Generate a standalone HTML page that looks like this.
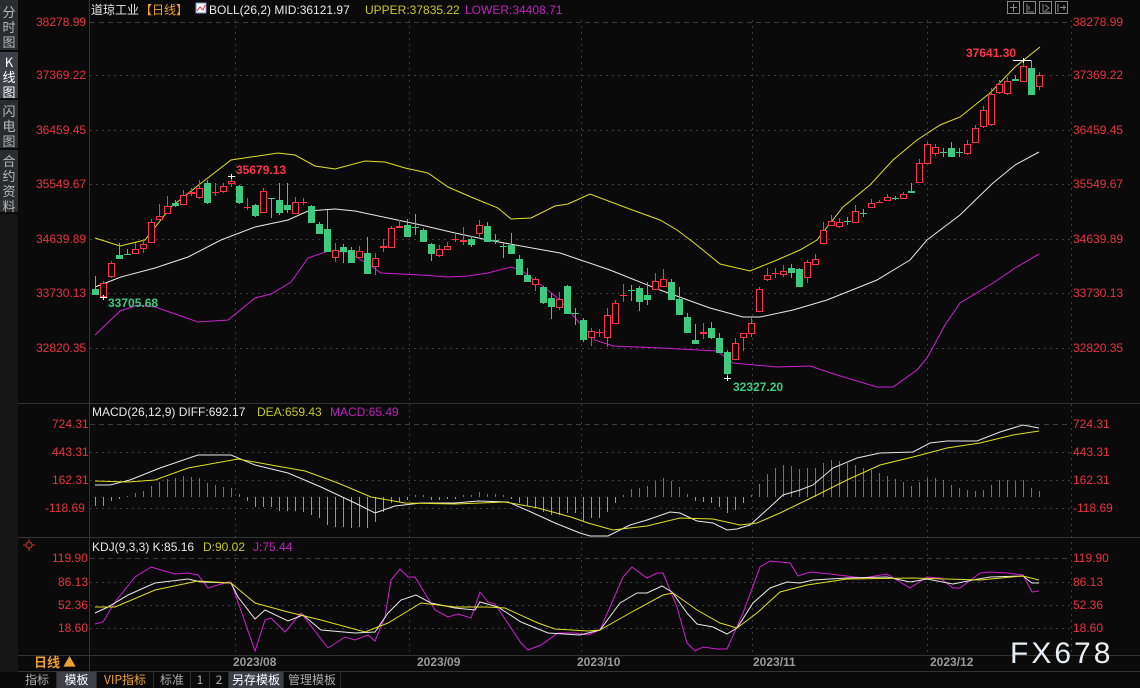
<!DOCTYPE html>
<html><head><meta charset="utf-8"><style>
html,body{margin:0;padding:0;background:#0a0a0a;}
body{width:1140px;height:688px;overflow:hidden;position:relative;font-family:"Liberation Sans","Noto Sans CJK SC",sans-serif;}
svg{position:absolute;left:0;top:0;}
.t{font-family:"Liberation Sans","Noto Sans CJK SC",sans-serif;font-size:12px;}
.side{position:absolute;left:0;width:18px;background:#2a2c30;color:#b8b8b8;font-size:13px;line-height:15px;text-align:center;font-family:"Noto Sans CJK SC",sans-serif;}
.tabs{position:absolute;left:18px;top:672px;height:16px;width:1122px;background:#0a0a0a;font-family:"Noto Sans CJK SC",sans-serif;font-size:12px;line-height:16px;color:#aaa;}
.tabs span{position:absolute;top:0;height:16px;text-align:center;border-right:1px solid #2a2a2a;}
</style></head><body>
<div class="side" style="top:0;height:50px;padding-top:4px;box-sizing:border-box;">分<br>时<br>图</div>
<div class="side" style="top:52px;height:46px;padding-top:2px;box-sizing:border-box;background:#3c3f46;color:#fff;">K<br>线<br>图</div>
<div class="side" style="top:100px;height:48px;padding-top:3px;box-sizing:border-box;">闪<br>电<br>图</div>
<div class="side" style="top:150px;height:62px;padding-top:3px;box-sizing:border-box;">合<br>约<br>资<br>料</div>
<div class="side" style="top:214px;height:458px;background:#151515;"></div>

<svg width="1140" height="688" viewBox="0 0 1140 688">
<g stroke="#333" stroke-width="1">
<line x1="89.5" y1="0" x2="89.5" y2="672"/>
<line x1="18" y1="403.5" x2="1140" y2="403.5"/>
<line x1="18" y1="537.5" x2="1140" y2="537.5"/>
<line x1="18" y1="655.5" x2="1140" y2="655.5"/>
<line x1="18" y1="671.5" x2="1140" y2="671.5"/>
</g>
<g stroke="#3a3a3a" stroke-width="1" stroke-dasharray="2,4">
<line x1="90" y1="22.5" x2="1070" y2="22.5" stroke-dasharray="5,4"/>
<line x1="90" y1="75.5" x2="1070" y2="75.5"/>
<line x1="90" y1="130.5" x2="1070" y2="130.5"/>
<line x1="90" y1="184.5" x2="1070" y2="184.5"/>
<line x1="90" y1="239.5" x2="1070" y2="239.5"/>
<line x1="90" y1="293.5" x2="1070" y2="293.5"/>
<line x1="90" y1="348.5" x2="1070" y2="348.5"/>
<line x1="90" y1="424.5" x2="1070" y2="424.5" stroke-dasharray="5,4"/>
<line x1="90" y1="452.5" x2="1070" y2="452.5"/>
<line x1="90" y1="480.5" x2="1070" y2="480.5"/>
<line x1="90" y1="508.5" x2="1070" y2="508.5"/>
<line x1="90" y1="558.5" x2="1070" y2="558.5" stroke-dasharray="5,4"/>
<line x1="90" y1="582.5" x2="1070" y2="582.5"/>
<line x1="90" y1="605.5" x2="1070" y2="605.5"/>
<line x1="90" y1="628.5" x2="1070" y2="628.5"/>
<line x1="235.5" y1="20" x2="235.5" y2="655"/>
<line x1="409.5" y1="20" x2="409.5" y2="655"/>
<line x1="581.5" y1="20" x2="581.5" y2="655"/>
<line x1="752.5" y1="20" x2="752.5" y2="655"/>
<line x1="927.5" y1="20" x2="927.5" y2="655"/>
<line x1="1071.5" y1="20" x2="1071.5" y2="655"/>
</g>

<text class="t" x="91" y="14" fill="#e8e8e8">道琼工业</text>
<text class="t" x="140" y="14" fill="#f0a030">【日线】</text>
<rect x="196" y="3" width="10" height="10" fill="#fff" stroke="#8090c0"/>
<polyline points="197,11 200,7 203,10 205,5" fill="none" stroke="#e03040" stroke-width="1"/>
<text class="t" x="209" y="14" fill="#e8e8e8">BOLL(26,2) MID:36121.97</text>
<text class="t" x="365" y="14" fill="#c8c820">UPPER:37835.22</text>
<text class="t" x="465" y="14" fill="#c020c0">LOWER:34408.71</text>
<g fill="none" stroke="#888" stroke-width="1">
<rect x="1007.5" y="1.5" width="12" height="12"/><rect x="1023.5" y="1.5" width="12" height="12"/><rect x="1039.5" y="1.5" width="12" height="12"/><rect x="1055.5" y="1.5" width="12" height="12"/>
<path d="M1013.5 4v8M1010 7.5h7M1027 4v8h7M1029 6v4M1043 4v8h7M1045 5l4 3-4 3M1058 4v8M1060 7.5h6M1064 5v5"/>
</g>

<g class="t" fill="#e8333f" font-size="12">
<text x="1073" y="26">38278.99</text><text x="1073" y="79">37369.22</text><text x="1073" y="134">36459.45</text><text x="1073" y="188">35549.67</text><text x="1073" y="243">34639.89</text><text x="1073" y="297">33730.13</text><text x="1073" y="352">32820.35</text>
<text x="36" y="26">38278.99</text><text x="36" y="79">37369.22</text><text x="36" y="134">36459.45</text><text x="36" y="188">35549.67</text><text x="36" y="243">34639.89</text><text x="36" y="297">33730.13</text><text x="36" y="352">32820.35</text>
<text x="1073" y="428">724.31</text><text x="1073" y="456">443.31</text><text x="1073" y="484">162.31</text><text x="1073" y="512">-118.69</text>
<text x="52" y="428">724.31</text><text x="52" y="456">443.31</text><text x="52" y="484">162.31</text><text x="45" y="512">-118.69</text>
<text x="1073" y="562">119.90</text><text x="1073" y="586">86.13</text><text x="1073" y="609">52.36</text><text x="1073" y="632">18.60</text>
<text x="52" y="562">119.90</text><text x="58" y="586">86.13</text><text x="58" y="609">52.36</text><text x="58" y="632">18.60</text>
</g>

<!-- Bollinger -->
<polyline fill="none" stroke="#e0e020" stroke-width="1" points="95,238 120,246 145,240 171,207 200,184 231,160 278,153 295,155 315,166 335,169 365,161 385,162 405,168 428,173 448,187 471,197 498,208 511,219 531,218 555,206 568,204 590,194 627,208 660,220 677,230 693,242 720,264 750,271 777,260 800,250 817,240 843,207 870,185 893,160 917,140 940,125 960,117 990,93 1015,67 1040,47"/>
<polyline fill="none" stroke="#e8e8e8" stroke-width="1" points="95,287 121,277 155,268 188,257 221,240 255,227 288,220 308,211 335,209 355,211 388,218 421,225 455,233 488,240 521,246 560,253 610,270 660,290 710,308 743,317 760,317 793,310 827,300 877,280 910,260 927,240 960,215 993,183 1015,165 1039,152"/>
<polyline fill="none" stroke="#d020d0" stroke-width="1" points="95,335 120,311 138,305 155,307 198,322 228,320 255,298 271,294 291,282 308,258 328,251 348,252 371,266 381,273 421,275 448,277 468,276 488,273 511,267 521,270 545,288 560,300 577,320 595,340 613,346 660,348 717,351 733,363 777,367 810,366 837,375 877,387 893,387 917,370 927,358 945,325 960,303 993,283 1015,268 1039,254"/>

<g stroke="#ff3348" fill="#0a0a0a" stroke-width="1">
<line x1="103.5" y1="281" x2="103.5" y2="297"/><rect x="100.5" y="283.5" width="6" height="13"/>
<line x1="111.5" y1="261" x2="111.5" y2="278"/><rect x="108.5" y="263.5" width="6" height="13"/>
<line x1="135.5" y1="243" x2="135.5" y2="254"/><rect x="132.5" y="249.5" width="6" height="4"/>
<line x1="143.5" y1="239" x2="143.5" y2="253"/><rect x="140.5" y="244.5" width="6" height="4"/>
<line x1="151.5" y1="219" x2="151.5" y2="243"/><rect x="148.5" y="222.5" width="6" height="20"/>
<line x1="159.5" y1="204" x2="159.5" y2="220"/><rect x="156.5" y="216.5" width="6" height="3"/>
<line x1="167.5" y1="196" x2="167.5" y2="213"/><rect x="164.5" y="206.5" width="6" height="7"/>
<line x1="183.5" y1="190" x2="183.5" y2="205"/><rect x="180.5" y="195.5" width="6" height="9"/>
<line x1="191.5" y1="188" x2="191.5" y2="196"/><rect x="188.5" y="192.5" width="6" height="1"/>
<line x1="199.5" y1="180" x2="199.5" y2="199"/><rect x="196.5" y="188.5" width="6" height="9"/>
<line x1="215.5" y1="183" x2="215.5" y2="196"/><line x1="212" y1="192.5" x2="219" y2="192.5"/>
<line x1="223.5" y1="183" x2="223.5" y2="193"/><rect x="220.5" y="186.5" width="6" height="5"/>
<line x1="231.5" y1="177" x2="231.5" y2="187"/><rect x="228.5" y="181.5" width="6" height="2"/>
<line x1="247.5" y1="198" x2="247.5" y2="210"/><line x1="244" y1="207.5" x2="251" y2="207.5"/>
<line x1="263.5" y1="188" x2="263.5" y2="213"/><rect x="260.5" y="191.5" width="6" height="21"/>
<line x1="295.5" y1="197" x2="295.5" y2="214"/><rect x="292.5" y="202.5" width="6" height="11"/>
<line x1="303.5" y1="198" x2="303.5" y2="205"/><line x1="300" y1="202.5" x2="307" y2="202.5"/>
<line x1="335.5" y1="243" x2="335.5" y2="262"/><rect x="332.5" y="250.5" width="6" height="7"/>
<line x1="359.5" y1="246" x2="359.5" y2="258"/><rect x="356.5" y="251.5" width="6" height="6"/>
<line x1="375.5" y1="253" x2="375.5" y2="275"/><rect x="372.5" y="258.5" width="6" height="8"/>
<line x1="383.5" y1="239" x2="383.5" y2="252"/><rect x="380.5" y="246.5" width="6" height="1"/>
<line x1="391.5" y1="226" x2="391.5" y2="248"/><rect x="388.5" y="228.5" width="6" height="19"/>
<line x1="399.5" y1="220" x2="399.5" y2="228"/><rect x="396.5" y="226.5" width="6" height="1"/>
<line x1="439.5" y1="245" x2="439.5" y2="257"/><rect x="436.5" y="249.5" width="6" height="6"/>
<line x1="447.5" y1="242" x2="447.5" y2="250"/><rect x="444.5" y="246.5" width="6" height="3"/>
<line x1="455.5" y1="232" x2="455.5" y2="242"/><line x1="452" y1="239.5" x2="459" y2="239.5"/>
<line x1="463.5" y1="227" x2="463.5" y2="245"/><rect x="460.5" y="240.5" width="6" height="1"/>
<line x1="479.5" y1="220" x2="479.5" y2="237"/><rect x="476.5" y="225.5" width="6" height="8"/>
<line x1="535.5" y1="277" x2="535.5" y2="291"/><rect x="532.5" y="279.5" width="6" height="5"/>
<line x1="559.5" y1="292" x2="559.5" y2="310"/><rect x="556.5" y="299.5" width="6" height="8"/>
<line x1="591.5" y1="328" x2="591.5" y2="346"/><rect x="588.5" y="331.5" width="6" height="6"/>
<line x1="599.5" y1="329" x2="599.5" y2="337"/><line x1="596" y1="332.5" x2="603" y2="332.5"/>
<line x1="607.5" y1="308" x2="607.5" y2="347"/><rect x="604.5" y="315.5" width="6" height="22"/>
<line x1="615.5" y1="300" x2="615.5" y2="324"/><rect x="612.5" y="303.5" width="6" height="20"/>
<line x1="623.5" y1="284" x2="623.5" y2="302"/><line x1="620" y1="295.5" x2="627" y2="295.5"/>
<line x1="655.5" y1="273" x2="655.5" y2="289"/><rect x="652.5" y="281.5" width="6" height="8"/>
<line x1="663.5" y1="269" x2="663.5" y2="287"/><rect x="660.5" y="279.5" width="6" height="7"/>
<line x1="703.5" y1="323" x2="703.5" y2="339"/><rect x="700.5" y="332.5" width="6" height="1"/>
<line x1="735.5" y1="338" x2="735.5" y2="360"/><rect x="732.5" y="343.5" width="6" height="16"/>
<line x1="743.5" y1="333" x2="743.5" y2="351"/><rect x="740.5" y="333.5" width="6" height="4"/>
<line x1="751.5" y1="318" x2="751.5" y2="337"/><rect x="748.5" y="323.5" width="6" height="10"/>
<line x1="759.5" y1="287" x2="759.5" y2="312"/><rect x="756.5" y="289.5" width="6" height="22"/>
<line x1="767.5" y1="268" x2="767.5" y2="281"/><rect x="764.5" y="275.5" width="6" height="4"/>
<line x1="775.5" y1="268" x2="775.5" y2="278"/><line x1="772" y1="273.5" x2="779" y2="273.5"/>
<line x1="783.5" y1="265" x2="783.5" y2="277"/><rect x="780.5" y="271.5" width="6" height="3"/>
<line x1="807.5" y1="260" x2="807.5" y2="283"/><rect x="804.5" y="262.5" width="6" height="15"/>
<line x1="815.5" y1="254" x2="815.5" y2="265"/><rect x="812.5" y="259.5" width="6" height="5"/>
<line x1="823.5" y1="222" x2="823.5" y2="244"/><rect x="820.5" y="230.5" width="6" height="13"/>
<line x1="831.5" y1="215" x2="831.5" y2="226"/><rect x="828.5" y="221.5" width="6" height="4"/>
<line x1="839.5" y1="218" x2="839.5" y2="228"/><rect x="836.5" y="222.5" width="6" height="4"/>
<line x1="855.5" y1="205" x2="855.5" y2="223"/><rect x="852.5" y="211.5" width="6" height="11"/>
<line x1="871.5" y1="199" x2="871.5" y2="208"/><rect x="868.5" y="203.5" width="6" height="4"/>
<line x1="879.5" y1="200" x2="879.5" y2="203"/><line x1="876" y1="202.5" x2="883" y2="202.5"/>
<line x1="887.5" y1="194" x2="887.5" y2="201"/><rect x="884.5" y="197.5" width="6" height="3"/>
<line x1="903.5" y1="192" x2="903.5" y2="199"/><rect x="900.5" y="194.5" width="6" height="4"/>
<line x1="919.5" y1="159" x2="919.5" y2="183"/><rect x="916.5" y="163.5" width="6" height="19"/>
<line x1="927.5" y1="142" x2="927.5" y2="164"/><rect x="924.5" y="144.5" width="6" height="19"/>
<line x1="935.5" y1="144" x2="935.5" y2="156"/><rect x="932.5" y="147.5" width="6" height="6"/>
<line x1="967.5" y1="140" x2="967.5" y2="155"/><rect x="964.5" y="144.5" width="6" height="9"/>
<line x1="975.5" y1="125" x2="975.5" y2="143"/><rect x="972.5" y="128.5" width="6" height="14"/>
<line x1="983.5" y1="106" x2="983.5" y2="128"/><rect x="980.5" y="110.5" width="6" height="16"/>
<line x1="991.5" y1="88" x2="991.5" y2="126"/><rect x="988.5" y="94.5" width="6" height="30"/>
<line x1="999.5" y1="80" x2="999.5" y2="94"/><rect x="996.5" y="84.5" width="6" height="8"/>
<line x1="1007.5" y1="77" x2="1007.5" y2="95"/><rect x="1004.5" y="81.5" width="6" height="12"/>
<line x1="1023.5" y1="62" x2="1023.5" y2="82"/><rect x="1020.5" y="66.5" width="6" height="15"/>
<line x1="1039.5" y1="72" x2="1039.5" y2="90"/><rect x="1036.5" y="75.5" width="6" height="11"/>
</g>
<g stroke="#3cc980" fill="#3cc980" stroke-width="1">
<line x1="95.5" y1="276" x2="95.5" y2="295"/><rect x="92.5" y="289.5" width="6" height="5"/>
<line x1="119.5" y1="243" x2="119.5" y2="259"/><rect x="116.5" y="255.5" width="6" height="3"/>
<line x1="127.5" y1="249" x2="127.5" y2="255"/><line x1="124" y1="254.5" x2="131" y2="254.5"/>
<line x1="175.5" y1="200" x2="175.5" y2="207"/><rect x="172.5" y="203.5" width="6" height="2"/>
<line x1="207.5" y1="180" x2="207.5" y2="204"/><rect x="204.5" y="183.5" width="6" height="19"/>
<line x1="239.5" y1="185" x2="239.5" y2="204"/><rect x="236.5" y="186.5" width="6" height="16"/>
<line x1="255.5" y1="204" x2="255.5" y2="217"/><rect x="252.5" y="205.5" width="6" height="10"/>
<line x1="271.5" y1="198" x2="271.5" y2="218"/><line x1="268" y1="198.5" x2="275" y2="198.5"/>
<line x1="279.5" y1="183" x2="279.5" y2="215"/><rect x="276.5" y="200.5" width="6" height="12"/>
<line x1="287.5" y1="183" x2="287.5" y2="213"/><rect x="284.5" y="205.5" width="6" height="4"/>
<line x1="311.5" y1="205" x2="311.5" y2="223"/><rect x="308.5" y="206.5" width="6" height="16"/>
<line x1="319.5" y1="222" x2="319.5" y2="234"/><rect x="316.5" y="224.5" width="6" height="9"/>
<line x1="327.5" y1="210" x2="327.5" y2="252"/><rect x="324.5" y="229.5" width="6" height="22"/>
<line x1="343.5" y1="244" x2="343.5" y2="263"/><rect x="340.5" y="247.5" width="6" height="4"/>
<line x1="351.5" y1="247" x2="351.5" y2="263"/><rect x="348.5" y="250.5" width="6" height="12"/>
<line x1="367.5" y1="237" x2="367.5" y2="274"/><rect x="364.5" y="253.5" width="6" height="20"/>
<line x1="407.5" y1="219" x2="407.5" y2="237"/><rect x="404.5" y="225.5" width="6" height="11"/>
<line x1="415.5" y1="214" x2="415.5" y2="235"/><line x1="412" y1="227.5" x2="419" y2="227.5"/>
<line x1="423.5" y1="228" x2="423.5" y2="242"/><rect x="420.5" y="230.5" width="6" height="11"/>
<line x1="431.5" y1="243" x2="431.5" y2="261"/><rect x="428.5" y="244.5" width="6" height="9"/>
<line x1="471.5" y1="236" x2="471.5" y2="247"/><rect x="468.5" y="239.5" width="6" height="5"/>
<line x1="487.5" y1="222" x2="487.5" y2="242"/><rect x="484.5" y="226.5" width="6" height="15"/>
<line x1="495.5" y1="234" x2="495.5" y2="244"/><line x1="492" y1="240.5" x2="499" y2="240.5"/>
<line x1="503.5" y1="243" x2="503.5" y2="258"/><line x1="500" y1="246.5" x2="507" y2="246.5"/>
<line x1="511.5" y1="233" x2="511.5" y2="253"/><rect x="508.5" y="245.5" width="6" height="8"/>
<line x1="519.5" y1="255" x2="519.5" y2="275"/><rect x="516.5" y="259.5" width="6" height="15"/>
<line x1="527.5" y1="268" x2="527.5" y2="282"/><rect x="524.5" y="275.5" width="6" height="6"/>
<line x1="543.5" y1="286" x2="543.5" y2="304"/><rect x="540.5" y="287.5" width="6" height="15"/>
<line x1="551.5" y1="293" x2="551.5" y2="319"/><rect x="548.5" y="298.5" width="6" height="8"/>
<line x1="567.5" y1="285" x2="567.5" y2="314"/><rect x="564.5" y="286.5" width="6" height="27"/>
<line x1="575.5" y1="308" x2="575.5" y2="325"/><line x1="572" y1="313.5" x2="579" y2="313.5"/>
<line x1="583.5" y1="318" x2="583.5" y2="342"/><rect x="580.5" y="320.5" width="6" height="19"/>
<line x1="631.5" y1="285" x2="631.5" y2="301"/><line x1="628" y1="290.5" x2="635" y2="290.5"/>
<line x1="639.5" y1="286" x2="639.5" y2="311"/><rect x="636.5" y="288.5" width="6" height="13"/>
<line x1="647.5" y1="282" x2="647.5" y2="305"/><rect x="644.5" y="295.5" width="6" height="4"/>
<line x1="671.5" y1="279" x2="671.5" y2="300"/><rect x="668.5" y="282.5" width="6" height="17"/>
<line x1="679.5" y1="287" x2="679.5" y2="315"/><rect x="676.5" y="299.5" width="6" height="15"/>
<line x1="687.5" y1="313" x2="687.5" y2="333"/><rect x="684.5" y="317.5" width="6" height="15"/>
<line x1="695.5" y1="324" x2="695.5" y2="344"/><rect x="692.5" y="340.5" width="6" height="3"/>
<line x1="711.5" y1="322" x2="711.5" y2="339"/><rect x="708.5" y="328.5" width="6" height="9"/>
<line x1="719.5" y1="333" x2="719.5" y2="353"/><rect x="716.5" y="338.5" width="6" height="14"/>
<line x1="727.5" y1="350" x2="727.5" y2="378"/><rect x="724.5" y="352.5" width="6" height="21"/>
<line x1="791.5" y1="264" x2="791.5" y2="278"/><rect x="788.5" y="268.5" width="6" height="4"/>
<line x1="799.5" y1="268" x2="799.5" y2="287"/><rect x="796.5" y="269.5" width="6" height="17"/>
<line x1="847.5" y1="217" x2="847.5" y2="225"/><line x1="844" y1="221.5" x2="851" y2="221.5"/>
<line x1="863.5" y1="209" x2="863.5" y2="217"/><line x1="860" y1="213.5" x2="867" y2="213.5"/>
<line x1="895.5" y1="196" x2="895.5" y2="200"/><line x1="892" y1="198.5" x2="899" y2="198.5"/>
<line x1="911.5" y1="183" x2="911.5" y2="193"/><rect x="908.5" y="191.5" width="6" height="1"/>
<line x1="943.5" y1="148" x2="943.5" y2="157"/><line x1="940" y1="152.5" x2="947" y2="152.5"/>
<line x1="951.5" y1="142" x2="951.5" y2="157"/><rect x="948.5" y="148.5" width="6" height="8"/>
<line x1="959.5" y1="148" x2="959.5" y2="157"/><line x1="956" y1="152.5" x2="963" y2="152.5"/>
<line x1="1015.5" y1="75" x2="1015.5" y2="81"/><rect x="1012.5" y="79.5" width="6" height="1"/>
<line x1="1031.5" y1="60" x2="1031.5" y2="95"/><rect x="1028.5" y="68.5" width="6" height="26"/>
</g>
<g stroke="#fff" stroke-width="1">
<path d="M100 297.5h7M103.5 295v5M228 176.5h7M231.5 174v5M724 378.5h7M727.5 376v5M1013 60.5h18M1023.5 58v5"/>
</g>
<g class="t" font-size="12" font-weight="bold">
<text x="236" y="174" fill="#ff3348">35679.13</text>
<text x="108" y="307" fill="#3cc980">33705.68</text>
<text x="733" y="391" fill="#3cc980">32327.20</text>
<text x="966" y="57" fill="#ff3348">37641.30</text>
</g>

<!-- MACD -->
<text class="t" x="92" y="416" fill="#e8e8e8">MACD(26,12,9) DIFF:692.17</text>
<text class="t" x="257" y="416" fill="#c8c820">DEA:659.43</text>
<text class="t" x="330" y="416" fill="#c020c0">MACD:65.49</text>
<path stroke="#e04050" stroke-width="1" fill="none" d="M127.5 497V496M135.5 497V493M143.5 497V491M151.5 497V486M159.5 497V482M167.5 497V479M175.5 497V478M183.5 497V476M191.5 497V477M199.5 497V478M207.5 497V483M215.5 497V485M223.5 497V487M231.5 497V488M239.5 497V494M415.5 497V495M423.5 497V495M463.5 497V495M471.5 497V495M479.5 497V492M487.5 497V494M495.5 497V494M503.5 497V495M623.5 497V495M631.5 497V489M639.5 497V488M647.5 497V486M655.5 497V481M663.5 497V478M671.5 497V481M679.5 497V487M687.5 497V494M751.5 497V495M759.5 497V484M767.5 497V474M775.5 497V468M783.5 497V465M791.5 497V466M799.5 497V469M807.5 497V468M815.5 497V468M823.5 497V463M831.5 497V460M839.5 497V461M847.5 497V463M855.5 497V465M863.5 497V468M871.5 497V470M879.5 497V473M887.5 497V476M895.5 497V479M903.5 497V482M911.5 497V486M919.5 497V482M927.5 497V478M935.5 497V478M943.5 497V480M951.5 497V485M959.5 497V488M967.5 497V490M975.5 497V491M983.5 497V490M991.5 497V485M999.5 497V480M1007.5 497V480M1015.5 497V481M1023.5 497V480M1031.5 497V488M1039.5 497V491"/>
<path stroke="#3cc980" stroke-width="1" fill="none" d="M95.5 497V506M103.5 497V506M111.5 497V501M119.5 497V499M247.5 497V501M255.5 497V507M263.5 497V507M271.5 497V507M279.5 497V511M287.5 497V511M295.5 497V511M303.5 497V512M311.5 497V515M319.5 497V518M327.5 497V525M335.5 497V527M343.5 497V527M351.5 497V528M359.5 497V527M367.5 497V528M375.5 497V522M383.5 497V512M391.5 497V503M399.5 497V502M407.5 497V500M431.5 497V500M439.5 497V500M447.5 497V499M455.5 497V499M511.5 497V499M519.5 497V503M527.5 497V506M535.5 497V508M543.5 497V512M551.5 497V515M559.5 497V515M567.5 497V513M575.5 497V513M583.5 497V521M591.5 497V518M599.5 497V518M607.5 497V512M615.5 497V503M695.5 497V501M703.5 497V502M711.5 497V503M719.5 497V507M727.5 497V513M735.5 497V510M743.5 497V503"/>
<polyline fill="none" stroke="#e8e8e8" stroke-width="1" points="95,485 110,485 130,480 160,468 198,455 231,455 255,465 288,473 321,487 355,503 375,513 395,506 421,503 455,503 478,501 508,502 531,512 555,523 580,533 590,536 608,536 630,525 647,520 670,512 680,513 697,521 713,523 727,530 737,529 750,525 770,507 783,495 800,490 813,485 833,468 857,458 880,453 913,452 930,443 947,441 977,441 1000,432 1023,425 1039,428"/>
<polyline fill="none" stroke="#e0e020" stroke-width="1" points="95,481 128,482 155,480 188,468 238,459 271,465 305,471 338,483 371,497 405,503 455,504 505,502 538,508 571,517 588,523 613,530 647,526 680,518 713,519 740,525 757,523 780,513 813,497 847,480 880,465 913,457 947,448 980,443 1013,435 1039,431"/>

<!-- KDJ -->
<g stroke="#d23030" fill="none"><circle cx="29" cy="545" r="3"/><path d="M23 545h3M32 545h3M29 539v3M29 548v3"/></g>
<text class="t" x="92" y="551" fill="#e8e8e8">KDJ(9,3,3) K:85.16</text>
<text class="t" x="203" y="551" fill="#c8c820">D:90.02</text>
<text class="t" x="253" y="551" fill="#c020c0">J:75.44</text>
<polyline fill="none" stroke="#d020d0" stroke-width="1" points="95,624 103,622 115,602 135,577 151,567 175,574 188,573 198,575 208,588 228,582 231,582 255,651 265,620 271,618 285,632 301,613 328,648 345,637 355,640 368,635 375,641 385,617 391,580 400,569 408,577 415,577 435,610 448,617 458,614 471,618 480,592 488,602 495,604 521,643 528,650 541,645 558,633 575,633 588,635 600,630 623,577 632,567 647,578 657,573 663,573 677,607 687,643 695,651 703,647 717,649 727,649 743,613 760,567 770,561 790,563 798,576 810,572 830,574 863,578 887,574 910,588 927,577 940,578 953,588 960,588 980,573 990,572 1007,573 1023,575 1032,592 1039,591"/>
<polyline fill="none" stroke="#e8e8e8" stroke-width="1" points="95,613 108,607 128,595 155,583 188,579 201,582 231,583 238,597 255,619 265,610 288,621 303,615 321,630 355,633 375,632 388,613 401,600 416,595 431,603 455,608 475,610 480,602 498,607 521,622 548,633 580,635 600,630 620,603 637,593 647,593 662,586 672,592 687,613 697,624 713,627 727,634 737,628 753,603 770,588 787,582 800,583 813,580 847,578 887,577 910,582 927,579 953,584 973,580 990,577 1023,576 1032,583 1039,583"/>
<polyline fill="none" stroke="#e0e020" stroke-width="1" points="95,607 115,607 155,590 198,581 231,583 255,603 288,612 321,620 365,632 388,623 421,603 455,607 488,607 505,608 538,623 555,629 588,631 600,630 630,613 663,595 673,593 697,610 720,623 737,628 757,613 780,592 807,585 847,579 913,578 980,580 1023,576 1039,580"/>

<text x="34" y="667" fill="#f0a030" font-family="Noto Sans CJK SC,sans-serif" font-size="13" font-weight="bold">日线 ▲</text>
<g class="t" fill="#9a9a9a" font-size="12" font-weight="bold">
<text x="233" y="666">2023/08</text><text x="417" y="666">2023/09</text><text x="577" y="666">2023/10</text><text x="753" y="666">2023/11</text><text x="930" y="666">2023/12</text>
</g>
<text x="1010" y="663" fill="#e8eef2" font-family="Liberation Sans,sans-serif" font-size="30" letter-spacing="3">FX678</text>
</svg>

<div class="tabs">
<span style="left:0;width:38px;">指标</span>
<span style="left:39px;width:39px;background:#3c3f48;color:#fff;">模板</span>
<span style="left:79px;width:56px;color:#f0a030;">VIP指标</span>
<span style="left:136px;width:36px;">标准</span>
<span style="left:173px;width:18px;">1</span>
<span style="left:192px;width:18px;">2</span>
<span style="left:211px;width:54px;background:#3c3f48;color:#fff;">另存模板</span>
<span style="left:266px;width:56px;">管理模板</span>
</div>
</body></html>
